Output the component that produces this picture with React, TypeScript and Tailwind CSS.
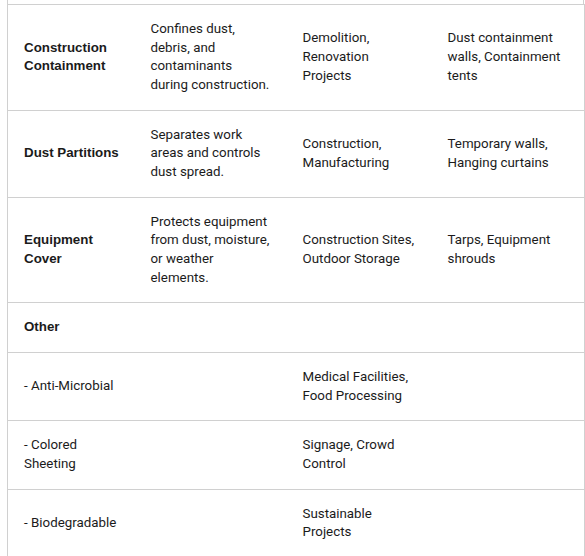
const rows: { name: string; bold?: boolean; desc: string; apps: string; ex: string }[] = [
  {
    name: 'Construction Containment',
    bold: true,
    desc: 'Confines dust, debris, and contaminants during construction.',
    apps: 'Demolition, Renovation Projects',
    ex: 'Dust containment walls, Containment tents',
  },
  {
    name: 'Dust Partitions',
    bold: true,
    desc: 'Separates work areas and controls dust spread.',
    apps: 'Construction, Manufacturing',
    ex: 'Temporary walls, Hanging curtains',
  },
  {
    name: 'Equipment Cover',
    bold: true,
    desc: 'Protects equipment from dust, moisture, or weather elements.',
    apps: 'Construction Sites, Outdoor Storage',
    ex: 'Tarps, Equipment shrouds',
  },
  { name: 'Other', bold: true, desc: '', apps: '', ex: '' },
  { name: '- Anti-Microbial', desc: '', apps: 'Medical Facilities, Food Processing', ex: '' },
  { name: '- Colored Sheeting', desc: '', apps: 'Signage, Crowd Control', ex: '' },
  { name: '- Biodegradable', desc: '', apps: 'Sustainable Projects', ex: '' },
]

export default function App() {
  return (
    <div
      className="h-[556px] w-[585px] overflow-hidden bg-white pl-[7px] pr-[1px] text-[13.33px] leading-[18.67px] text-[#1b1b1b]"
      style={{ fontFamily: "Roboto, 'Liberation Sans', sans-serif" }}
    >
      <div className="h-[4px] border-x border-[#d0d0d0]" />
      <table className="w-[577px] table-fixed border-collapse">
        <colgroup>
          <col className="w-[127px]" />
          <col className="w-[152px]" />
          <col className="w-[145px]" />
          <col className="w-[153px]" />
        </colgroup>
        <tbody>
          {rows.map((r) => (
            <tr key={r.name} className="border border-[#d0d0d0]">
              <td
                className={`py-[15px] pl-4 pr-2 align-middle ${
                  r.bold ? "font-bold font-['Liberation_Sans',Arial,sans-serif]" : ''
                }`}
              >
                {r.name}
              </td>
              <td className="px-4 py-[15px] align-middle">{r.desc}</td>
              <td className="px-4 py-[15px] align-middle">{r.apps}</td>
              <td className="px-4 py-[15px] align-middle">{r.ex}</td>
            </tr>
          ))}
        </tbody>
      </table>
    </div>
  )
}
